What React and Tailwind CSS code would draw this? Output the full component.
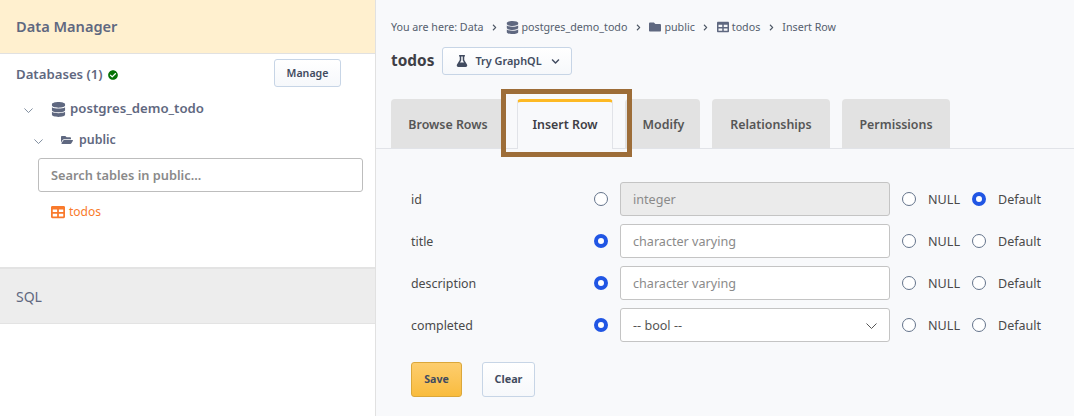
import { FaDatabase, FaFolderOpen, FaFolder, FaTable, FaFlask, FaCheckCircle, FaChevronRight, FaChevronDown } from 'react-icons/fa';

const rows = [
  { name: 'id', placeholder: 'integer', value: 'default', disabled: true },
  { name: 'title', placeholder: 'character varying', value: 'value' },
  { name: 'description', placeholder: 'character varying', value: 'value' },
  { name: 'completed', select: true, value: 'value' },
];

const tabs = [
  { label: 'Browse Rows', width: 'w-[114px]' },
  { label: 'Insert Row', width: 'w-[96px]', active: true },
  { label: 'Modify', width: 'w-[75px] pl-[2px]' },
  { label: 'Relationships', width: 'w-[118px]' },
  { label: 'Permissions', width: 'w-[108px]' },
];

const Radio = ({ on }) =>
  on ? (
    <span className="block w-[14px] h-[14px] rounded-full border-[4px] border-[#2156e4] bg-white shrink-0" />
  ) : (
    <span className="block w-[14px] h-[14px] rounded-full border border-[#64748b] bg-white shrink-0" />
  );

const Crumb = () => <FaChevronRight className="text-[#4b5563] text-[7px] mx-[7.5px] shrink-0" />;

const Caret = ({ className }) => (
  <svg viewBox="0 0 11 6" fill="none" stroke="currentColor" strokeWidth="1" className={className}>
    <path d="M0.5 0.5 L5.5 5.5 L10.5 0.5" />
  </svg>
);

const Sidebar = () => (
  <aside className="w-[376px] shrink-0 h-full bg-white border-r border-[#e1e1e1] text-[#5f6880]">
    <div className="h-[54px] bg-[#fff0cf] border-b border-[#e1e1e1] pl-4 flex items-center pt-px">
      <span className="text-[14.6px] font-semibold">Data Manager</span>
    </div>
    <div className="h-[213px]">
      <div className="flex justify-between items-start pl-4 pr-[34px] pt-[5px]">
        <div className="flex items-center mt-[6px] h-[20px]">
          <span className="text-[13.2px] font-semibold">Databases (1)</span>
          <FaCheckCircle className="text-[#067306] text-[10px] ml-[5px]" />
        </div>
        <button className="w-[67px] h-[28px] pt-px rounded-[3px] border border-[#c7d5e6] bg-gradient-to-b from-white to-[#f6f8fb] text-[#414b60] text-[10.6px] font-semibold">
          Manage
        </button>
      </div>
      <div className="flex items-center h-[20px] mt-[12px] pl-[24px]">
        <Caret className="text-[#64748b] w-[9px] h-[5px] shrink-0 mt-[3px]" />
        <FaDatabase className="text-[#5f6880] text-[15px] ml-[18px]" />
        <span className="text-[13.2px] font-semibold ml-[4px]">postgres_demo_todo</span>
      </div>
      <div className="flex items-center h-[20px] mt-[11px] pl-[34px]">
        <Caret className="text-[#64748b] w-[9px] h-[5px] shrink-0 mt-[3px]" />
        <FaFolderOpen className="text-[#5f6880] text-[12px] ml-[18px]" />
        <span className="text-[12.4px] font-semibold ml-[6px]">public</span>
      </div>
      <div className="ml-[38px] mr-[12px] mt-[8px] h-[34px] pt-px rounded-[3px] border border-[#bdbdbd] bg-white flex items-center pl-3 text-[12.8px] font-semibold text-[#8a8a8a]">
        Search tables in public...
      </div>
      <div className="flex items-center h-[20px] mt-[10px] pl-[51px] text-[#f97a2c]">
        <FaTable className="text-[14px]" />
        <span className="text-[12px] ml-[4px]">todos</span>
      </div>
    </div>
    <div className="h-[57px] bg-[#ededed] border-t-2 border-b border-[#e3e3e3] pl-4 flex items-center text-[14px]">SQL</div>
  </aside>
);

const Header = () => (
  <div className="pl-[15px] pt-[20px]">
    <div className="flex items-center h-[14px] text-[10.7px] text-[#555e6e] whitespace-nowrap">
      <span>You are here: Data</span>
      <Crumb />
      <FaDatabase className="text-[#5f6880] text-[13px] mr-[3px]" />
      <span>postgres_demo_todo</span>
      <Crumb />
      <FaFolder className="text-[#5f6880] text-[12px] mr-[3px]" />
      <span>public</span>
      <Crumb />
      <FaTable className="text-[#5f6880] text-[12px] mr-[3px]" />
      <span>todos</span>
      <Crumb />
      <span>Insert Row</span>
    </div>
    <div className="flex items-center mt-[13px] h-[28px]">
      <span className="text-[15.4px] font-bold text-[#3f3f46]">todos</span>
      <button className="ml-[8px] w-[130px] h-[28px] rounded-[3px] border border-[#c7d5e6] bg-gradient-to-b from-white to-[#f6f8fb] flex items-center pl-[13px] text-[#414b60] text-[10.9px] font-semibold">
        <FaFlask className="text-[12px] mr-[7px]" />
        Try GraphQL
        <FaChevronDown className="text-[9px] ml-[9px]" />
      </button>
    </div>
  </div>
);

const Tabs = () => (
  <div className="relative mt-[24px] h-[50px] border-b border-[#e1e3e8] pl-[15px] flex gap-[12px]">
    {tabs.map((t) => (
      <div
        key={t.label}
        className={
          t.active
            ? `${t.width} h-[50px] rounded-t-[4px] bg-[#f8f9fb] border-x border-[#e1e3e8] border-t-[3px] border-t-[#fdb924] flex items-center justify-center text-[#3f3f46] text-[12.4px] font-semibold whitespace-nowrap`
            : `${t.width} h-[49px] pt-[3px] rounded-t-[4px] bg-[#e2e2e2] flex items-center justify-center text-[#565656] text-[12.4px] font-semibold whitespace-nowrap`
        }
      >
        {t.label}
      </div>
    ))}
    {/* annotation box around the active tab */}
    <div className="absolute left-[125px] top-[-10px] w-[131px] h-[68px] border-[5px] border-[#9d6d38]" />
  </div>
);

const FormRow = ({ row }) => (
  <div className="flex items-center h-[34px]">
    <span className="w-[183px] pt-[2px] text-[12.4px] text-[#4a4a4a]">{row.name}</span>
    <Radio on={row.value === 'value'} />
    {row.select ? (
      <div className="ml-[12px] w-[270px] h-[34px] pt-[2px] rounded-[3px] border border-[#c4c4c4] bg-white flex items-center justify-between pl-[12px] pr-[12px] text-[12.6px] text-[#555]">
        <span>-- bool --</span>
        <Caret className="text-[#555] w-[11px] h-[6px]" />
      </div>
    ) : (
      <div
        className={
          row.disabled
            ? 'ml-[12px] w-[270px] h-[34px] pt-[2px] rounded-[3px] border border-[#c4c4c4] bg-[#ebebeb] flex items-center pl-[12px] text-[12.6px] text-[#8a8a8a]'
            : 'ml-[12px] w-[270px] h-[34px] pt-[2px] rounded-[3px] border border-[#c4c4c4] bg-white flex items-center pl-[12px] text-[12.6px] text-[#8a8a8a]'
        }
      >
        {row.placeholder}
      </div>
    )}
    <span className="ml-[12px]"><Radio on={false} /></span>
    <span className="ml-[12px] pt-[2px] w-[44px] text-[12.6px] text-[#4a4a4a]">NULL</span>
    <Radio on={row.value === 'default'} />
    <span className="ml-[12px] pt-[2px] text-[12.5px] text-[#4a4a4a]">Default</span>
  </div>
);

export default function App() {
  return (
    <div className="w-[1074px] h-[416px] overflow-hidden flex bg-[#f8f9fb] font-['Noto_Sans',sans-serif]">
      <Sidebar />
      <main className="flex-1 min-w-0">
        <Header />
        <Tabs />
        <div className="pl-[35px] pt-[33px] flex flex-col gap-[8px]">
          {rows.map((r) => (
            <FormRow key={r.name} row={r} />
          ))}
        </div>
        <div className="pl-[35px] pt-[20px] flex gap-[20px]">
          <button className="w-[51px] h-[35px] rounded-[3px] border border-[#dba73a] bg-gradient-to-b from-[#fdcd6d] to-[#f9bc3c] text-[#414b60] text-[10.6px] font-bold">
            Save
          </button>
          <button className="w-[53px] h-[35px] rounded-[3px] border border-[#c7d5e6] bg-gradient-to-b from-white to-[#f6f8fb] text-[#414b60] text-[10.8px] font-bold">
            Clear
          </button>
        </div>
      </main>
    </div>
  );
}
